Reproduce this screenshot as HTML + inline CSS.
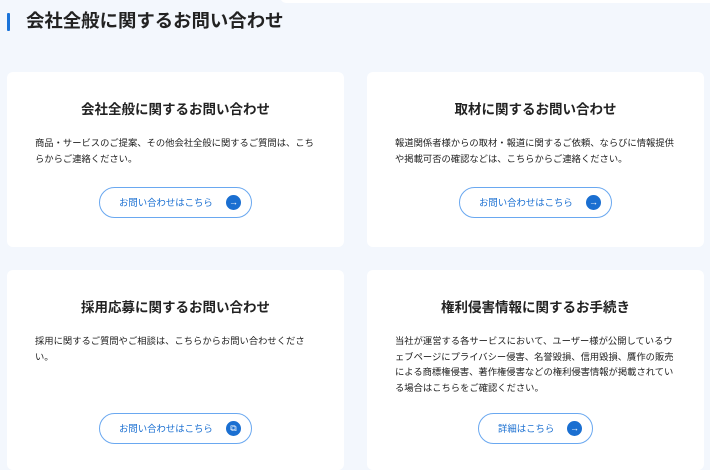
<!DOCTYPE html>
<html><head><meta charset="utf-8"><style>
body{margin:0;width:710px;height:459px;overflow:hidden;background:#f3f7fd;font-family:"Liberation Sans","Noto Sans CJK JP",sans-serif;color:#222;position:relative}
.top{position:absolute;left:280px;top:-10px;width:440px;height:13px;background:#fff;border-radius:8px}
h1{position:absolute;left:26px;top:7px;margin:0;font-size:18.4px;font-weight:700;line-height:28px}
.bar{position:absolute;left:7px;top:13px;width:3px;height:18px;background:#1a73d9;border-radius:1px}
.card{position:absolute;background:#fff;border-radius:6px;width:337px}
.card h2{position:absolute;top:28px;left:0;right:0;text-align:center;margin:0;font-size:13.5px;font-weight:700;line-height:20px}
.card p{position:absolute;left:28px;width:281px;top:64px;margin:0;font-size:9.3px;line-height:15.5px;line-break:normal}
.btn{position:absolute;height:31px;border:1px solid #6aa8f0;border-radius:17px;box-sizing:border-box;color:#1a6fd1;font-size:9.4px;line-height:29px}
.btn span{position:absolute;left:19px}
.ic{position:absolute;right:10px;top:7px;width:15px;height:15px;border-radius:50%;background:#1a6fd1;color:#fff;font-size:9px;line-height:15px;text-align:center}
</style></head><body>
<div class="top"></div>
<div class="bar"></div>
<h1>会社全般に関するお問い合わせ</h1>

<div class="card" style="left:7px;top:72px;height:175px">
<h2>会社全般に関するお問い合わせ</h2>
<p>商品・サービスのご提案、その他会社全般に関するご質問は、こちらからご連絡ください。</p>
<div class="btn" style="left:92px;top:115px;width:153px"><span>お問い合わせはこちら</span><div class="ic">→</div></div>
</div>

<div class="card" style="left:367px;top:72px;height:175px">
<h2>取材に関するお問い合わせ</h2>
<p>報道関係者様からの取材・報道に関するご依頼、ならびに情報提供や掲載可否の確認などは、こちらからご連絡ください。</p>
<div class="btn" style="left:92px;top:115px;width:153px"><span>お問い合わせはこちら</span><div class="ic">→</div></div>
</div>

<div class="card" style="left:7px;top:270px;height:200px">
<h2>採用応募に関するお問い合わせ</h2>
<p>採用に関するご質問やご相談は、こちらからお問い合わせくださ<br>い。</p>
<div class="btn" style="left:92px;top:143px;width:153px"><span>お問い合わせはこちら</span><div class="ic">⧉</div></div>
</div>

<div class="card" style="left:367px;top:270px;height:200px">
<h2>権利侵害情報に関するお手続き</h2>
<p>当社が運営する各サービスにおいて、ユーザー様が公開しているウ<br>ェブページにプライバシー侵害、名誉毀損、信用毀損、贋作の販売<br>による商標権侵害、著作権侵害などの権利侵害情報が掲載されてい<br>る場合はこちらをご確認ください。</p>
<div class="btn" style="left:111px;top:143px;width:115px"><span>詳細はこちら</span><div class="ic">→</div></div>
</div>
</body></html>
